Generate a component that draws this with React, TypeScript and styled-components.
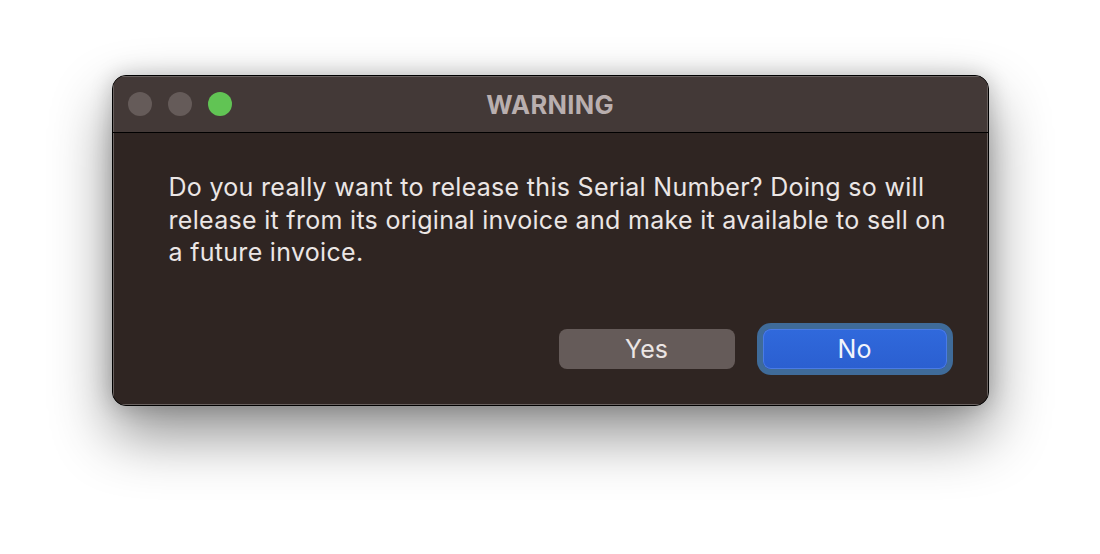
import React from "react";
import styled, { createGlobalStyle } from "styled-components";

const Global = createGlobalStyle`
  html, body {
    margin: 0;
    padding: 0;
    background: #ffffff;
  }
  body {
    font-family: Inter, "Noto Sans", "Liberation Sans", sans-serif;
  }
`;

const Page = styled.div`
  width: 1100px;
  height: 554px;
  display: flex;
  justify-content: center;
  align-items: flex-start;
  padding-top: 75px;
  box-sizing: border-box;
`;

const Window = styled.div`
  width: 877px;
  height: 331px;
  box-sizing: border-box;
  border: 1px solid #000;
  border-radius: 14px;
  overflow: hidden;
  display: flex;
  flex-direction: column;
  background: #2f2522;
  box-shadow: 0 28px 60px rgba(0, 0, 0, 0.45), 0 0 22px rgba(0, 0, 0, 0.2);
`;

const TitleBar = styled.div`
  height: 56px;
  flex: none;
  display: flex;
  align-items: center;
  position: relative;
  padding-left: 15px;
  background: #433937;
  border-bottom: 1px solid #000;
  box-shadow: inset 0 1px 0 #6a6260, inset 1px 0 0 #6a6260, inset -1px 0 0 #6a6260;
`;

const Lights = styled.div`
  display: flex;
  gap: 16px;
`;

const Light = styled.span<{ $color: string }>`
  width: 24px;
  height: 24px;
  border-radius: 50%;
  background: ${(p) => p.$color};
`;

const Title = styled.div`
  position: absolute;
  inset: 0;
  display: flex;
  align-items: center;
  justify-content: center;
  font-size: 25.5px;
  font-weight: 700;
  color: #b9afaf;
  letter-spacing: 0.3px;
  pointer-events: none;
`;

const Body = styled.div`
  flex: 1;
  display: flex;
  flex-direction: column;
  padding: 38px 30px 36px 56px;
  box-shadow: inset 1px 0 0 #6a6260, inset -1px 0 0 #6a6260, inset 0 -1px 0 #6a6260;
`;

const Message = styled.p`
  margin: 0;
  font-size: 25px;
  line-height: 32.5px;
  color: #ebe6e5;
  letter-spacing: 0.3px;
  white-space: nowrap;
`;

const Actions = styled.div`
  margin-top: auto;
  padding-right: 11px;
  display: flex;
  justify-content: flex-end;
  align-items: center;
  gap: 28px;
`;

const Button = styled.button<{ $primary?: boolean }>`
  width: ${(p) => (p.$primary ? "184px" : "176px")};
  height: 40px;
  border-radius: 8px;
  border: none;
  padding: 0;
  font-family: inherit;
  font-size: 25px;
  color: ${(p) => (p.$primary ? "#f2f4fb" : "#ebe5e4")};
  background: ${(p) =>
    p.$primary ? "linear-gradient(#3069dc, #2b5fd0)" : "#655b59"};
  box-shadow: ${(p) =>
    p.$primary ? "inset 0 0 0 1px #4a7be6, 0 0 0 6px #3f6b99" : "none"};
  cursor: pointer;
`;

export default function App() {
  return (
    <>
      <Global />
      <Page>
        <Window>
          <TitleBar>
            <Lights>
              <Light $color="#655b59" />
              <Light $color="#655b59" />
              <Light $color="#61c454" />
            </Lights>
            <Title>WARNING</Title>
          </TitleBar>
          <Body>
            <Message>
              Do you really want to release this Serial Number? Doing so will
              <br />
              release it from its original invoice and make it available to sell on
              <br />
              a future invoice.
            </Message>
            <Actions>
              <Button>Yes</Button>
              <Button $primary>No</Button>
            </Actions>
          </Body>
        </Window>
      </Page>
    </>
  );
}
